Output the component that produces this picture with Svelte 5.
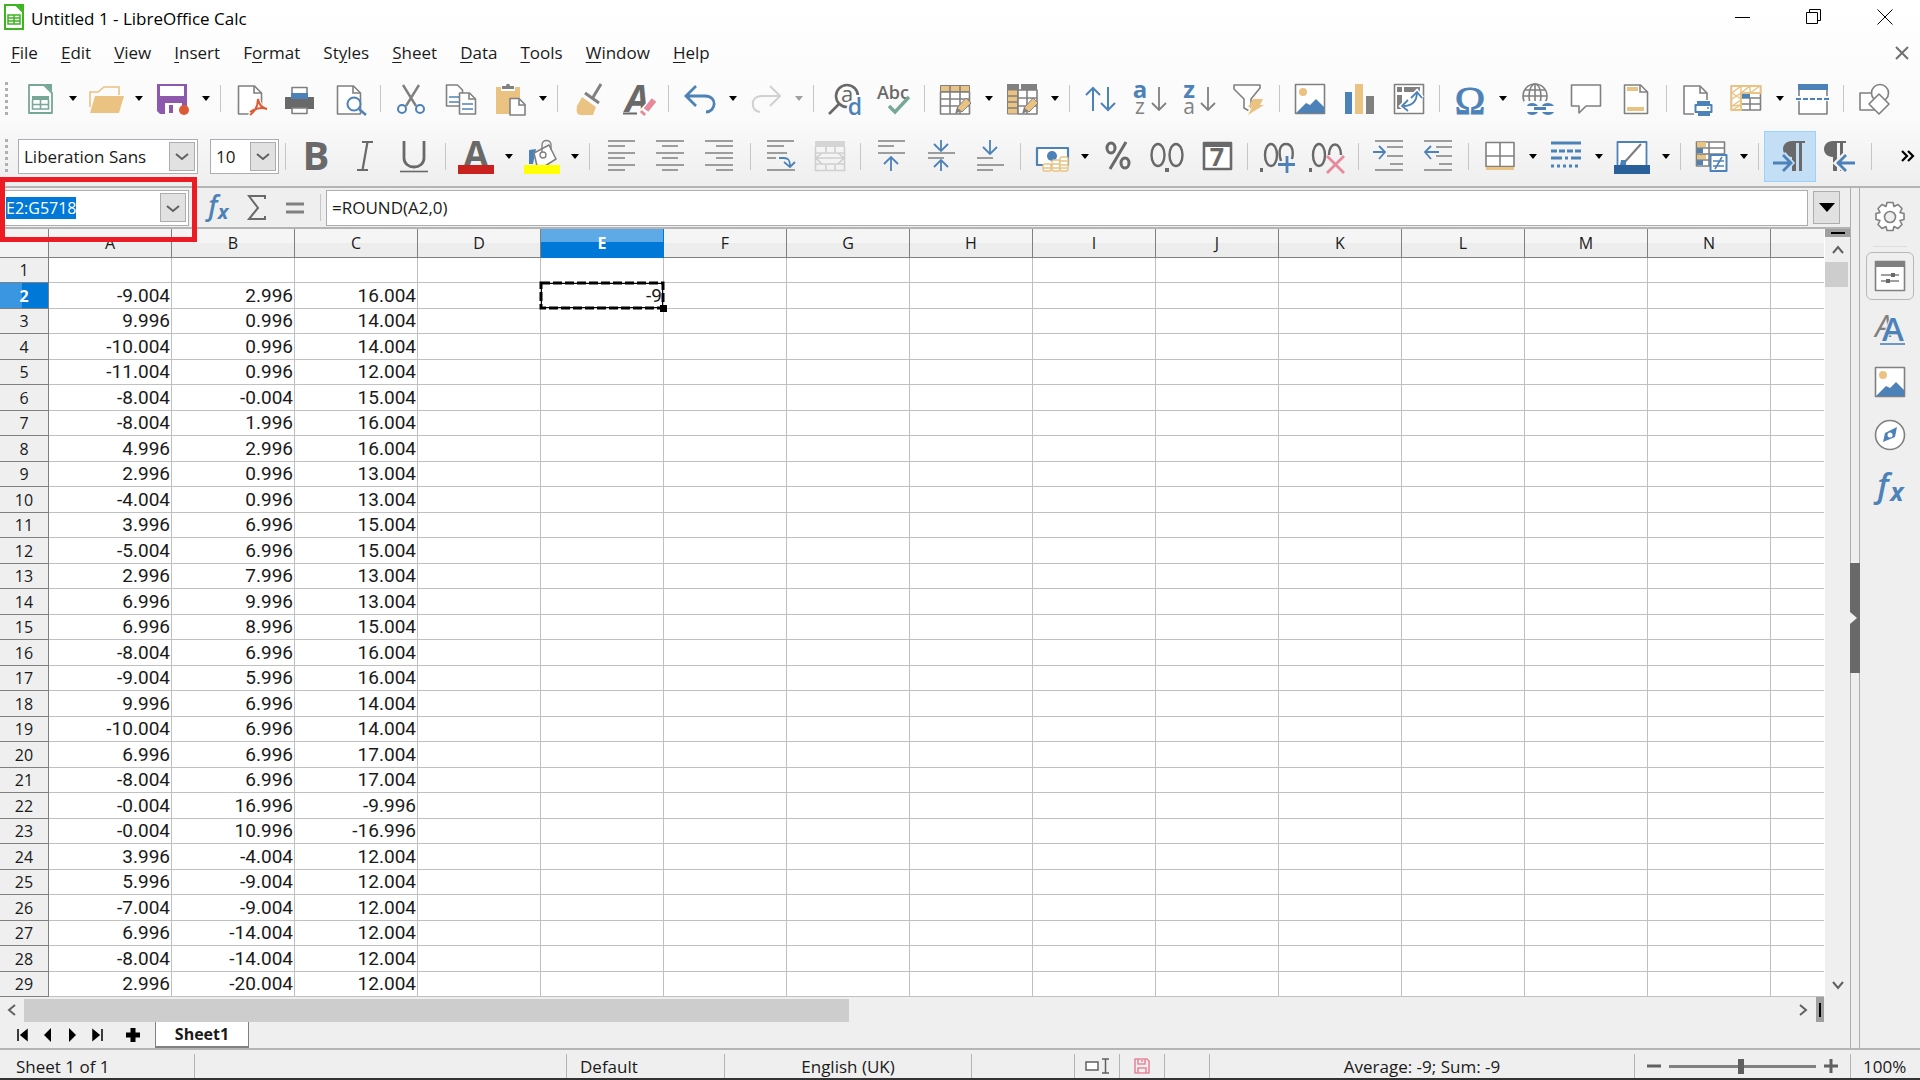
<script lang="ts">
  import { onMount } from 'svelte';

  interface Tool { icon: string; label: string; menu?: boolean; active?: boolean; disabled?: boolean; }

  const t = (icon: string, label: string, menu = false): Tool => ({ icon, label, menu });

  const menus = [
    ['', 'F', 'ile'], ['', 'E', 'dit'], ['', 'V', 'iew'], ['', 'I', 'nsert'], ['F', 'o', 'rmat'],
    ['St', 'y', 'les'], ['', 'S', 'heet'], ['', 'D', 'ata'], ['', 'T', 'ools'], ['', 'W', 'indow'], ['', 'H', 'elp'],
  ];

  const standardBar: Tool[][] = [
    [t('new', 'New', true), t('open', 'Open', true), t('save', 'Save', true)],
    [t('pdf', 'Export as PDF'), t('print', 'Print'), t('preview', 'Print Preview')],
    [t('cut', 'Cut'), t('copy', 'Copy'), t('paste', 'Paste', true)],
    [t('brush', 'Clone Formatting'), t('clear', 'Clear Direct Formatting')],
    [t('undo', 'Undo', true), { icon: 'redo', label: 'Redo', menu: true, disabled: true }],
    [t('find', 'Find & Replace'), t('spell', 'Spelling')],
    [t('row', 'Row', true), t('column', 'Column', true)],
    [t('sort', 'Sort'), t('az', 'Sort Ascending'), t('za', 'Sort Descending'), t('filter', 'AutoFilter')],
    [t('image', 'Insert Image'), t('chart', 'Insert Chart'), t('pivot', 'Pivot Table')],
    [t('omega', 'Special Character', true), t('link', 'Hyperlink'), t('comment', 'Comment'), t('header', 'Headers and Footers')],
    [t('area', 'Define Print Area'), t('freeze', 'Freeze Rows and Columns', true), t('split', 'Split Window')],
    [t('shapes', 'Show Draw Functions')],
  ];

  const formatBar: Tool[][] = [
    [t('bold', 'Bold'), t('italic', 'Italic'), t('underline', 'Underline')],
    [t('fontColor', 'Font Color', true), t('fill', 'Background Color', true)],
    [t('left', 'Align Left'), t('center', 'Center Horizontally'), t('right', 'Align Right')],
    [t('wrap', 'Wrap Text'), { icon: 'merge', label: 'Merge Cells', disabled: true }],
    [t('top', 'Align Top'), t('middle', 'Center Vertically'), t('bottom', 'Align Bottom')],
    [t('currency', 'Currency', true), t('percent', 'Percent'), t('number', 'Number'), t('date', 'Date')],
    [t('addDec', 'Add Decimal Place'), t('delDec', 'Delete Decimal Place')],
    [t('indent', 'Increase Indent'), t('outdent', 'Decrease Indent')],
    [t('borders', 'Borders', true), t('style', 'Border Style', true), t('lineColor', 'Border Color', true)],
    [t('cond', 'Conditional Formatting', true)],
    [{ icon: 'ltr', label: 'Left-To-Right', active: true }, t('rtl', 'Right-To-Left')],
  ];

  const G = '#808080', D = '#696969', B = '#4d82b8', O = '#eac282', P = '#e8899b';
  const ln = (d: string, c = G, w = 1.6, x = '') => `<path d="${d}" fill="none" stroke="${c}" stroke-width="${w}" ${x}/>`;
  const bx = (d: string, c = G, w = 1.6) => `<path d="${d}" fill="#fff" stroke="${c}" stroke-width="${w}" stroke-linejoin="round"/>`;
  const fl = (d: string, c = G) => `<path d="${d}" fill="${c}"/>`;
  const tx = (x: number, y: number, s: number, c: string, v: string, x2 = '') =>
    `<text x="${x}" y="${y}" font-size="${s}" fill="${c}" text-anchor="middle" font-family="Open Sans, sans-serif" ${x2}>${v}</text>`;
  const picture = bx('M3.5 3.5h29v29h-29z') + `<circle cx="11" cy="11" r="4" fill="${O}"/>` + fl('M4 32L14 22l4 2 6-6 8 8v6z', B);
  const pencil = fl('M18 33l2-7 4 4z', G) + `<path d="M20 27L29 17l5 5-9 9z" fill="${O}" stroke="${G}"/>`;
  const pilcrow = (x: number) => fl(`M${x} 3h13v2h-3v28h-3V5h-3v28h-4V19c-6 0-9-4-9-8s3-8 9-8z`, D);

  const icons: Record<string, string> = {
    new: bx('M7 4h15l8 8v20H7z', '#76a797', 1.8) + fl('M22 3h8v8z', '#76a797') + fl('M10 15h17v4H10z', '#76a797') +
      ln('M10.5 19v9h16v-9M18.5 15v13M10 23.500h17', '#76a797', 1.6),
    open: ln('M2 26V11h8l6-5h15v8', O, 1.6) + fl('M7 15h29l-5 17H2z', O),
    save: fl('M2 3h30v30H5l-3-3z', '#8e59ad') + fl('M5 5h24v10H5zM10 22h17v11H10z', '#fff') + fl('M14 24h4v8h-4z', '#8e59ad') +
      '<circle cx="29" cy="29" r="5" fill="#dc5a35"/>',
    pdf: bx('M5.500 5h16l7 7v21h-23z') + ln('M21 5v7h7') + fl('M14 36l20-2-8-18-6 8z', '#fbfbfb') +
      ln('M17 34c4-3 8-9 8-16 1 6 4 9 9 10-6-2-11-1-17 3', '#dc5a35', 2),
    print: fl('M3 16h29v12H3z', D) + bx('M10 17V6.500h15V17z', G) + fl('M9 12h17v6H9z', B) + bx('M10 27h15v5.500H10z'),
    preview: bx('M5.500 5h16l7 7v21h-23z') + ln('M21 5v7h7') + `<circle cx="22" cy="23" r="6.500" fill="#fff" stroke="${B}" stroke-width="2"/>` + ln('M27 28l7 6', B, 2.4),
    cut: ln('M10 4l13 21M26 4L13 25', G, 2.4) + `<g fill="none" stroke="${B}" stroke-width="2"><circle cx="9" cy="28" r="4"/><circle cx="27" cy="28" r="4"/></g>`,
    copy: bx('M3.500 4h11l5 5v16h-16z') + ln('M6 16h10M6 21h10', B) + bx('M16.500 12h10l6 6v15h-16z') + ln('M26 12v6h6') + ln('M19 23h11M19 28h11', B),
    paste: fl('M4 6h24v27H4z', O) + fl('M9 5h14v5H9z', '#fff') + fl('M10 5h4c0-3 4-3 4 0h4v3H10z') + bx('M18 17.500h9l6 6v10.500H18z') + ln('M27 18v6h6'),
    brush: ln('M30 3l-9 15', G, 3) + ln('M14 12l14 10', G, 3) + fl('M11 16l14 10-3 8H10c-4 0-5-3-4-9z', O),
    clear: tx(17, 31, 37, D, 'A', 'font-weight="700" font-style="italic"') + ln('M3 32.500h14', D, 2) + ln('M23 32L35 19', '#fff', 9) + ln('M26 29l8-10', P, 6) + ln('M22 33l2-2', P, 6),
    undo: ln('M14 5L4 15l10 10M5 15h18c13 0 11 16 1 16', B, 2.8),
    redo: ln('M22 5l10 10-10 10M31 15H14C1 15 3 31 12 31', '#d0d0d0', 2),
    find: `<circle cx="21" cy="15" r="11" fill="none" stroke="${D}" stroke-width="2.600"/>` + ln('M3 33l10-10', D, 2.6) + tx(21, 21, 22, D, 'a') +
      tx(29, 34, 23, B, 'd', 'stroke="#fff" stroke-width="4" paint-order="stroke" font-weight="600"'),
    spell: tx(17, 18, 18, D, 'Abc', 'font-weight="600"') + ln('M13 25l6 6 14-15', '#76a797', 3.4),
    row: bx('M3.500 11h29v22h-29z') + ln('M3 18h30M3 25h30M13 11v22M23 11v22') + `<path d="M3.500 4.500h29v6h-29z" fill="${O}" stroke="${G}"/>` + ln('M13 4v7M23 4v7') + pencil,
    column: bx('M14 9h19v24H14z') + ln('M14 17h19M14 25h19M23 9v24') + fl('M3 3h12v6H3zM17 3h16v6H17z') + `<path d="M3.500 9h10v24h-10z" fill="${O}" stroke="${G}"/>` + ln('M3 15h11M3 21h11M3 27h11') + pencil,
    sort: ln('M11 30V7M4 14l7-7 7 7M26 6v23M19 22l7 7 7-7', B, 2),
    az: tx(8, 17, 24, B, 'a', 'font-weight="700"') + tx(8, 33, 21, G, 'z') + ln('M27 6v23M20 22l7 7 7-7', G, 1.8),
    za: tx(8, 17, 24, B, 'z', 'font-weight="700"') + tx(8, 33, 21, G, 'a') + ln('M27 6v23M20 22l7 7 7-7', G, 1.8),
    filter: bx('M4 4h26v3l-9 11v13l-7-4V18L4 8z') + ln('M34 17L19 34', '#fbfbfb', 7) + fl('M23 18h10l-3 6h4L18 34l4-8h-4z', O),
    image: picture,
    chart: fl('M4 11h7v22H4z', B) + fl('M14 3h8v30h-8z', O) + fl('M25 15h8v18h-8z'),
    pivot: bx('M3.500 3.500h29v29h-29z') + fl('M6 6h5v5H6zM13 6h16v5H13zM6 14h5v14H6z') + ln('M12 25c10 0 14-6 14-14M17 19l-6 6 6 5M20 17l6-6 5 6', '#fff', 5) + ln('M12 25c10 0 14-6 14-14M17 19l-6 6 6 5M20 17l6-6 5 6', B, 1.8),
    omega: `<text x="18" y="33" font-size="41" fill="${B}" stroke="${B}" text-anchor="middle" font-family="Liberation Serif, serif">Ω</text>`,
    link: `<g fill="none" stroke="${G}" stroke-width="1.600"><circle cx="16" cy="15" r="12"/><ellipse cx="16" cy="15" rx="6" ry="12"/><path d="M4 15h24M16 3v24M6 9h20"/></g>` +
      fl('M5 20h31v15H5z', '#fbfbfb') + fl('M8 25c1-4 9-4 11 0zM23 25c1-4 10-4 12 0zM15 26h12v3H15zM8 31h11c-2 4-10 4-11 0zM23 31h12c-2 4-10 4-12 0z', B),
    comment: bx('M3.500 4h29v21H18l-7 7v-7H3.500z'),
    header: bx('M6.500 4h16l7 7v21.500h-23z') + ln('M22 4v7h7') + fl('M9 6h11v4H9zM9 26h17v4H9z', O),
    area: bx('M5 5h16l7 7v21H5z') + ln('M21 5v7h7') + fl('M15 19h20v16H15z', '#fbfbfb') + fl('M18 20h13v4H18zM19 30h12v5H19z', B) + bx('M16.500 24h16v7h-16z', B, 2) + ln('M28 27h2', B),
    freeze: bx('M3.500 5h29v24h-29z') + ln('M13 17h19M13 23h19M22 17v12') + `<path d="M13 29H3.500V5h29v7H13z" fill="#fff" stroke="${O}" stroke-width="1.800"/>` +
      ln('M4 12l9-7v7l9-7v7l10-7M4 18l9-6v7l-9 6 9-1-9 5M4 12l9 6M13 5v24', O, 1.4) + fl('M14 13h8v4h-8z', B),
    split: bx('M4 4h28v29H4z') + fl('M3 3h30v6H3z', B) + fl('M1 15h34v5H1z', '#fbfbfb') + ln('M1 18h34', B, 1.8, 'stroke-dasharray="5 2"'),
    shapes: bx('M4 12h17v17H4z') + '<circle cx="24" cy="12" r="8.500" fill="#fff" stroke="#808080" stroke-width="1.600"/>' + bx('M23 13l10 10-10 10-10-10z'),
    bold: tx(18, 32, 40, D, 'B', 'font-weight="700"'),
    italic: ln('M15 4h11M10 32h11M20.500 4l-5 28', D, 2.2),
    underline: ln('M8 3v17c0 12 20 12 20 0V3', D, 2.8) + ln('M4 33.500h28', D, 1.6),
    fontColor: tx(18, 29, 36, D, 'A', 'font-weight="700"') + fl('M0 27h36v9H0z', '#c9211e'),
    fill: fl('M5 26V12l7-1-3 15z', B) + bx('M10 15l15-8 7 14-11 7H13z') + ln('M18 17V7c0-6 9-6 9 0v5', G, 1.4) + '<circle cx="19" cy="17" r="3" fill="#fff" stroke="#808080" stroke-width="1.400"/>' + fl('M0 27h36v9H0z', '#ffff00'),
    left: ln('M5 3h27M5 8h17M5 15h27M5 20h17M5 27h27M5 32h17'),
    center: ln('M4 3h28M10 8h16M4 15h28M10 20h16M4 27h28M10 32h16'),
    right: ln('M4 3h28M15 8h17M4 15h28M15 20h17M4 27h28M15 32h17'),
    wrap: ln('M4 3h27M4 8h17M4 15h20M4 20h9M4 32h28') + ln('M16 20h5c5 0 6 3 6 8M21 24l6 5 5-5', B, 1.8),
    merge: fl('M3 3h30v6H3z', '#d5d5d5') + ln('M3.500 9v23.500h29V9M14 9v6M23 9v6M14 27v6M23 27v6M3 15h8M25 15h8M3 26h8M25 26h8M5 20h26M10 15l-6 5 6 6M26 15l6 5-6 6M11 15h14M11 26h14', '#cfcfcf', 1.6),
    top: ln('M5 3h27M5 8h16M5 15h27') + ln('M18 33V20M11 26l7-7 7 7', B, 1.8),
    middle: ln('M5 15h27M5 20h16') + ln('M18 2v10M11 6l7 7 7-7M18 33V23M11 29l7-7 7 7', B, 1.8),
    bottom: ln('M5 20h16M5 27h27M5 32h16') + ln('M18 2v13M11 9l7 7 7-7', B, 1.8),
    currency: bx('M3 10h31v17H3z', B, 2.2) + `<circle cx="18" cy="18" r="5" fill="${B}"/>` + `<g fill="#fff" stroke="${O}" stroke-width="1.400"><rect x="9" y="26" width="8" height="7" rx="2"/><rect x="18" y="22" width="8" height="11" rx="2"/><rect x="26" y="19" width="8" height="14" rx="2"/><path d="M9 30h8M18 26h8M18 30h8M26 23h8M26 27h8M26 30h8"/></g>`,
    percent: `<g fill="none" stroke="${D}" stroke-width="3"><ellipse cx="11" cy="10" rx="4" ry="5"/><ellipse cx="25" cy="25" rx="4" ry="5"/><path d="M26 4L10 31"/></g>`,
    number: `<g fill="none" stroke="${D}" stroke-width="2.400"><ellipse cx="9" cy="17" rx="6.500" ry="11"/><ellipse cx="27" cy="17" rx="6.500" ry="11"/></g>` + fl('M16 30h4v4h-4z', D),
    date: bx('M5 5h27v26H5z', D, 2.6) + fl('M4 4h29v5H4z', D) + tx(18, 28, 25, D, '7', 'font-weight="700"'),
    addDec: `<g fill="none" stroke="${D}" stroke-width="2.400"><ellipse cx="11" cy="17" rx="6" ry="11"/><path d="M21 23c-3-10-1-17 5-17s8 7 6 15"/></g>` + fl('M0 30h3v4H0z', D) + ln('M18 26.500h17M27 18v17', B, 2.8),
    delDec: `<g fill="none" stroke="${D}" stroke-width="2.400"><ellipse cx="10" cy="17" rx="6" ry="11"/><path d="M20 17c0-14 12-14 12 0"/></g>` + fl('M0 30h3v4H0z', D) + ln('M18 18l17 17M35 18L18 35', P, 2.8),
    indent: ln('M4 3h28M16 9h16M16 18h16M19 26h13M4 32h28') + ln('M2 14h12M8 8l6 6-6 7', B, 1.8),
    outdent: ln('M4 3h28M16 9h16M16 18h16M19 26h13M4 32h28') + ln('M19 14H5M11 8l-6 6 6 7', B, 1.8),
    borders: bx('M4 4.500h28v24H4z') + ln('M18 4v24M4 18h28') + fl('M4 29h28v3H4z', O),
    style: ln('M3 5h30', B, 3) + ln('M3 13h30', B, 3, 'stroke-dasharray="6 2"') + ln('M3 20h30', B, 3, 'stroke-dasharray="11 3 3 3"') + ln('M3 28h27', B, 3, 'stroke-dasharray="3 3"'),
    lineColor: bx('M3.500 4h29v25h-29z', B, 1.8) + ln('M9 26L27 6', G, 2.2) + fl('M6 27l1-5h5v5z', B) + fl('M0 27h36v9H0z', '#2a6099'),
    cond: bx('M3.500 4h28v24h-28z') + fl('M4 4h9v5H4zM4 16h9v5H4z', O) + fl('M4 10h6v5H4zM4 22h6v5H4z', B) + ln('M4 10h28M4 16h28M4 22h28M16 4v24') + bx('M17.500 17h16v16h-16z', B, 2) + ln('M20 23h11M20 28h11M29 19l-7 12', B, 1.6),
    ltr: pilcrow(20) + ln('M2 25h17M11 16l8 9-8 8', '#c4dff5', 6) + ln('M1 25h18M11 17l8 8-8 8', B, 2.8),
    rtl: pilcrow(11) + ln('M33 25H15M24 16l-9 9 9 8', '#f3f3f3', 6) + ln('M33 25H15M24 17l-8 8 8 8', B, 2.8),
    gear: bx('M15 3.500h6l1 4 4-2 4 4-2 4 4 1v6l-4 1 2 4-4 4-4-2-1 4h-6l-1-4-4 2-4-4 2-4-4-1v-6l4-1-2-4 4-4 4 2z') + '<circle cx="18" cy="18" r="5.500" fill="#efefef" stroke="#808080" stroke-width="1.600"/>',
    properties: bx('M3.500 3.500h29v29h-29z') + fl('M3 3h30v6H3z') + ln('M9 17h18M9 23h18') + fl('M19 15h4v4h-4zM14 21h4v4h-4z', D),
    styles: tx(12, 26, 31, G, 'A', 'font-style="italic"') + tx(21, 30, 33, B, 'A', 'font-weight="600" stroke="#efefef" stroke-width="2" paint-order="stroke"') + ln('M8 33h25', B, 1.6),
    gallery: picture,
    navigator: '<circle cx="18" cy="18" r="14.500" fill="#fff" stroke="#808080" stroke-width="1.600"/>' + fl('M11 25l2-9 12-6-2 10z', B) + '<circle cx="18" cy="18" r="2.500" fill="#fff"/>',
    fx: tx(11, 27, 33, B, 'f', 'font-weight="600" font-style="italic"') + tx(25, 31, 25, B, 'x', 'font-weight="700" font-style="italic"'),
    wizard: tx(12, 25, 27, B, 'f', 'font-weight="600" font-style="italic"') + tx(22, 29, 20, B, 'x', 'font-weight="700" font-style="italic"'),
    sum: ln('M26 9V6H10l9 12-9 11h16v-3', D, 2),
    equals: ln('M9 14h18M9 22h18', G, 3),
  };

  const columns = 'ABCDEFGHIJKLMN'.split('');
  const data = [
    [], ['-9.004', '2.996', '16.004', '', '-9'], ['9.996', '0.996', '14.004'], ['-10.004', '0.996', '14.004'],
    ['-11.004', '0.996', '12.004'], ['-8.004', '-0.004', '15.004'], ['-8.004', '1.996', '16.004'],
    ['4.996', '2.996', '16.004'], ['2.996', '0.996', '13.004'], ['-4.004', '0.996', '13.004'],
    ['3.996', '6.996', '15.004'], ['-5.004', '6.996', '15.004'], ['2.996', '7.996', '13.004'],
    ['6.996', '9.996', '13.004'], ['6.996', '8.996', '15.004'], ['-8.004', '6.996', '16.004'],
    ['-9.004', '5.996', '16.004'], ['9.996', '6.996', '14.004'], ['-10.004', '6.996', '14.004'],
    ['6.996', '6.996', '17.004'], ['-8.004', '6.996', '17.004'], ['-0.004', '16.996', '-9.996'],
    ['-0.004', '10.996', '-16.996'], ['3.996', '-4.004', '12.004'], ['5.996', '-9.004', '12.004'],
    ['-7.004', '-9.004', '12.004'], ['6.996', '-14.004', '12.004'], ['-8.004', '-14.004', '12.004'],
    ['2.996', '-20.004', '12.004'],
  ];

  const decks = [
    { icon: 'properties', label: 'Properties' }, { icon: 'styles', label: 'Styles' }, { icon: 'gallery', label: 'Gallery' },
    { icon: 'navigator', label: 'Navigator' }, { icon: 'fx', label: 'Functions' },
  ];

  let deck = $state('properties');
  let reference = $state('E2:G5718');
  let formula = $state('=ROUND(A2,0)');
  let zoom = $state(100);
  let nameBox: HTMLInputElement;

  onMount(() => {
    nameBox.focus();
    nameBox.select();
  });
</script>

{#snippet glyph(name: string)}
  <svg class="icon" width="36" height="36" viewBox="0 0 36 36" aria-hidden="true">{@html icons[name]}</svg>
{/snippet}

{#snippet chevron(d: string)}
  <svg width="14" height="14" viewBox="0 0 14 14" aria-hidden="true"><path {d} fill="none" stroke="#606060" stroke-width="2" /></svg>
{/snippet}

{#snippet tools(groups: Tool[][])}
  {#each groups as group, g}
    {#if g > 0}<span class="sep"></span>{/if}
    {#each group as tool}
      <button class="tool" class:active={tool.active} disabled={tool.disabled} aria-label={tool.label}>{@render glyph(tool.icon)}</button>
      {#if tool.menu}
        <button class="drop" disabled={tool.disabled} aria-label="{tool.label} options"></button>
      {/if}
    {/each}
  {/each}
{/snippet}

<div class="app">
  <div class="top">
    <header class="titlebar">
      <svg width="20" height="26" viewBox="0 0 20 26" aria-hidden="true">
        <path d="M1 1h11l7 7v17H1z" fill="#fff" stroke="#3cb521" stroke-width="2" />
        <path d="M12 0h8v8z" fill="#3cb521" />
        <path d="M4 11h12v9H4zM4 14h12M4 17h12M10 11v9" fill="none" stroke="#3cb521" stroke-width="1.500" />
      </svg>
      <span class="title">Untitled 1 - LibreOffice Calc</span>
      <button class="win" aria-label="Minimize"><svg width="16" height="16"><path d="M0 8.500h15" stroke="#000" /></svg></button>
      <button class="win" aria-label="Restore"><svg width="16" height="16"><path d="M.5 3.500h11v11H.5zM3.500 3V.5h11v11H12" fill="none" stroke="#000" /></svg></button>
      <button class="win" aria-label="Close"><svg width="16" height="16"><path d="M.5.5l15 15M15.500.5l-15 15" stroke="#000" /></svg></button>
    </header>
    <nav class="menubar">
      {#each menus as [before, key, after]}
        <button>{before}<u>{key}</u>{after}</button>
      {/each}
      <button class="close-doc" aria-label="Close Document"><svg width="14" height="14"><path d="M1 1l12 12M13 1L1 13" stroke="#707070" stroke-width="2" /></svg></button>
    </nav>
    <div class="toolbar standard">
      <span class="grip"></span>
      {@render tools(standardBar)}
    </div>
    <div class="toolbar formatting">
      <span class="grip"></span>
      <div class="combo font-name">
        <select aria-label="Font Name"><option>Liberation Sans</option></select>
        <span class="combo-btn">{@render chevron('M1 5l6 5 6-5')}</span>
      </div>
      <div class="combo font-size">
        <select aria-label="Font Size"><option>10</option></select>
        <span class="combo-btn">{@render chevron('M1 5l6 5 6-5')}</span>
      </div>
      <span class="sep"></span>
      {@render tools(formatBar)}
      <span class="sep"></span>
      <button class="more" aria-label="More controls"><svg width="14" height="12"><path d="M1 1l5 5-5 5M7 1l5 5-5 5" fill="none" stroke="#000" stroke-width="2.200" /></svg></button>
    </div>
  </div>

  <div class="main">
    <div class="work">
      <div class="formula-bar">
        <div class="name-box">
          <input aria-label="Name Box" bind:this={nameBox} bind:value={reference} />
          <button class="combo-btn" aria-label="Named ranges">{@render chevron('M1 5l6 5 6-5')}</button>
          <span class="marker"></span>
        </div>
        <button aria-label="Function Wizard">{@render glyph('wizard')}</button>
        <button aria-label="Select Function">{@render glyph('sum')}</button>
        <button aria-label="Formula">{@render glyph('equals')}</button>
        <span class="sep"></span>
        <input class="formula" aria-label="Input line" bind:value={formula} />
        <button class="expand" aria-label="Expand Formula Bar"></button>
      </div>

      <div class="sheet">
        <table>
          <colgroup>
            <col class="col-head" />
            {#each columns as c}<col class="col-cell" />{/each}
            <col />
          </colgroup>
          <thead>
            <tr>
              <th class="corner"></th>
              {#each columns as c}<th class:current={c === 'E'}>{c}</th>{/each}
              <th class="rest"></th>
            </tr>
          </thead>
          <tbody>
            {#each data as row, r}
              <tr>
                <th class:current={r === 1}>{r + 1}</th>
                {#each columns as c, i}
                  {#if r === 1 && c === 'E'}
                    <td class="cursor">{row[i]}<svg class="ants" aria-hidden="true"><rect width="100%" height="100%" /></svg></td>
                  {:else}
                    <td>{row[i] ?? ''}</td>
                  {/if}
                {/each}
                <td class="rest"></td>
              </tr>
            {/each}
          </tbody>
        </table>
        <div class="vscroll">
          <span class="split-h"></span>
          <button aria-label="Scroll up">{@render chevron('M2 10l5-6 5 6')}</button>
          <span class="thumb"></span>
          <button class="last" aria-label="Scroll down">{@render chevron('M2 4l5 6 5-6')}</button>
        </div>
      </div>

      <div class="hscroll">
        <button aria-label="Scroll left">{@render chevron('M10 2L4 7l6 5')}</button>
        <div class="track"><span class="thumb"></span></div>
        <button aria-label="Scroll right">{@render chevron('M4 2l6 5-6 5')}</button>
        <span class="split-v"></span>
      </div>

      <div class="tabs">
        <button aria-label="First sheet"><svg width="12" height="14"><path d="M1 1v12M10 2v10L4 7z" stroke="#000" stroke-width="1.500" /></svg></button>
        <button aria-label="Previous sheet"><svg width="12" height="14"><path d="M9 0v14L2 7z" /></svg></button>
        <button aria-label="Next sheet"><svg width="12" height="14"><path d="M2 0v14l7-7z" /></svg></button>
        <button aria-label="Last sheet"><svg width="12" height="14"><path d="M10 1v12M1 2v10l6-5z" stroke="#000" stroke-width="1.500" /></svg></button>
        <button class="add" aria-label="Add sheet"><svg width="14" height="14"><path d="M7 0v14M0 7h14" stroke="#000" stroke-width="5" /></svg></button>
        <button class="tab">Sheet1</button>
      </div>
    </div>

    <button class="splitter" aria-label="Hide sidebar"><span></span></button>

    <aside class="sidebar">
      <button aria-label="Sidebar Settings">{@render glyph('gear')}</button>
      <hr />
      {#each decks as d}
        <button class:selected={deck === d.icon} aria-label={d.label} onclick={() => (deck = d.icon)}>{@render glyph(d.icon)}</button>
      {/each}
    </aside>
  </div>

  <footer class="statusbar">
    <span class="field sheets">Sheet 1 of 1</span>
    <span class="field found"></span>
    <span class="field page-style">Default</span>
    <span class="field language">English (UK)</span>
    <span class="field blank"></span>
    <span class="field flag">
      <svg width="24" height="16"><path d="M1 4h12v8H1z" fill="#fff" stroke="#606060" stroke-width="1.500" /><path d="M17 1h7M17 15h7M20.500 1v14" stroke="#606060" stroke-width="1.500" /></svg>
    </span>
    <span class="field flag">
      <svg width="16" height="16"><path d="M1 1h12l2 2v12H1zM4 1v5h7V1M4 15v-5h8v5M8 2v2" fill="none" stroke="#e8899b" stroke-width="1.600" /></svg>
    </span>
    <span class="field flag"></span>
    <span class="field sums">Average: -9; Sum: -9</span>
    <span class="field zoom">
      <button aria-label="Zoom out"><svg width="14" height="14"><path d="M0 7h14" stroke="#606060" stroke-width="3" /></svg></button>
      <input type="range" aria-label="Zoom" min="0" max="204" bind:value={zoom} />
      <button aria-label="Zoom in"><svg width="14" height="14"><path d="M0 7h14M7 0v14" stroke="#606060" stroke-width="3" /></svg></button>
    </span>
    <span class="percent">{zoom}%</span>
  </footer>
</div>

<style>
  :global(body) { overflow: hidden; }

  .app {
    display: flex; flex-direction: column; height: 100vh; box-sizing: border-box;
    border-bottom: 2px solid #333; background: #efefef; color: #1a1a1a;
    font-family: "Open Sans", "Noto Sans", sans-serif; font-size: 17px;
  }
  .app * { box-sizing: border-box; }
  button { padding: 0; border: 0; background: none; font: inherit; color: inherit; display: flex; align-items: center; justify-content: center; }
  input, select { font: inherit; color: inherit; border: 0; outline: 0; min-width: 0; }
  svg { display: block; overflow: visible; flex: none; }

  .top { background: linear-gradient(#fff, #fafafa 65%, #eee); border-bottom: 2px solid #b4b4b4; }

  .titlebar { display: flex; align-items: center; height: 34px; padding-left: 4px; }
  .title { flex: 1; padding: 2px 0 0 7px; color: #000; }
  .win { width: 71px; height: 34px; }

  .menubar { display: flex; align-items: center; gap: 23px; height: 37px; padding: 0 11px; }
  .menubar u { text-underline-offset: 3px; }
  .close-doc { margin-left: auto; }

  .toolbar { display: flex; align-items: center; padding-left: 5px; }
  .standard { height: 55px; padding-right: 21px; }
  .formatting { height: 60px; padding-right: 5px; }
  .grip { width: 3px; height: 34px; margin-right: 7px; background: repeating-linear-gradient(#b0b0b0 0 3px, transparent 3px 6px); }
  .tool { flex: 1 1 0; min-width: 0; height: 51px; }
  .tool.active { background: #c4dff5; border: 1px solid #99d1ff; }
  .drop { width: 17px; height: 51px; }
  .drop::before, .expand::before { content: ""; border: 4px solid transparent; border-top: 5px solid #000; border-bottom: 0; }
  .drop:disabled::before { border-top-color: #a0a0a0; }
  .sep { flex: none; width: 12px; height: 27px; background: linear-gradient(#c6c6c6, #c6c6c6) center / 1px 100% no-repeat; }
  .more { width: 38px; height: 51px; justify-content: flex-end; }

  .combo { position: relative; display: flex; flex: none; height: 35px; background: #fff; border: 1px solid #abadb3; }
  .combo select { appearance: none; width: 100%; padding: 0 5px; background: none; }
  .combo .combo-btn { position: absolute; right: 2px; top: 2px; pointer-events: none; }
  .combo-btn { display: flex; align-items: center; justify-content: center; width: 26px; height: 29px; background: #e1e1e1; border: 1px solid #adadad; }
  .font-name { width: 180px; margin: 0 12px 0 3px; }
  .font-size { width: 69px; }

  .main { display: flex; flex: 1; min-height: 0; border-bottom: 2px solid #b4b4b4; }
  .work { display: flex; flex-direction: column; flex: 1; min-width: 0; }

  .formula-bar { display: flex; align-items: center; height: 41px; padding-right: 10px; border-bottom: 2px solid #b4b4b4; }
  .formula-bar > button:not(.expand) { width: 38px; height: 36px; }
  .formula-bar > .name-box + button { margin-left: 11px; }
  .name-box { position: relative; display: flex; align-items: center; width: 189px; height: 36px; padding: 0 2px 0 5px; background: #fff; border: 1px solid #abadb3; }
  .name-box input { flex: 1; padding: 0; background: none; font-size: 16px; }
  .name-box input::selection { background: #0078d7; color: #fff; }
  .marker { position: absolute; z-index: 3; left: -1px; top: -14px; width: 197px; height: 65px; border: 5px solid #ed1c24; pointer-events: none; }
  .formula { flex: 1; height: 36px; margin-right: 5px; padding: 0 5px; background: #fff; border: 1px solid #abadb3; }
  .expand { width: 27px; height: 33px; background: #e1e1e1; border: 1px solid #adadad; }
  .expand::before { border-width: 9px 8px 0; }

  .sheet { display: flex; background: #fff; }
  table { flex: 1; width: 0; table-layout: fixed; border-spacing: 0; font-size: 16px; }
  .col-head { width: 49px; }
  .col-cell { width: 123px; }
  th, td { height: 25px; padding: 0; line-height: 20px; white-space: nowrap; }
  tbody tr:nth-child(even) > * { height: 26px; }
  thead th { height: 29px; background: linear-gradient(#f5f5f5 50%, #ededed 50%); }
  th { font-weight: 400; background: #efefef; border-right: 1px solid #808080; border-bottom: 1px solid #808080; }
  th.corner { background: #f3f3f3; }
  thead .rest { border-right: 0; }
  thead .current { background: linear-gradient(#5eaae6 45%, #0078d7 45%); border-color: #0078d7; color: #fff; font-weight: 700; }
  tbody .current { background: linear-gradient(90deg, #3a96e0 45%, #0078d7 45%); color: #fff; font-weight: 700; }
  td { padding-right: 1px; border-right: 1px solid #c0c0c0; border-bottom: 1px solid #c0c0c0; text-align: right; font-family: Roboto, sans-serif; font-size: 19px; }
  td.rest { border-right: 0; }
  .cursor { position: relative; }
  .cursor::before { content: ""; position: absolute; inset: 0; border: 1px solid #000; }
  .cursor::after { content: ""; position: absolute; right: -4px; bottom: -4px; width: 7px; height: 7px; background: #000; }
  .ants { position: absolute; left: 0; top: 0; width: 100%; height: 100%; }
  .ants rect { fill: none; stroke: #000; stroke-width: 3; stroke-dasharray: 9 3; }

  .vscroll { display: flex; flex-direction: column; width: 25px; margin-left: 1px; background: #efefef; }
  .vscroll button { height: 25px; }
  .vscroll .thumb { height: 25px; margin-right: 2px; background: #cdcdcd; }
  .vscroll .last { margin-top: auto; }
  .split-h { display: flex; height: 8px; background: linear-gradient(#000, #000) center / 14px 2px no-repeat #a0a0a0; }

  .hscroll { display: flex; height: 25px; padding-right: 26px; }
  .hscroll button { width: 24px; }
  .track { display: flex; flex: 1; padding-top: 2px; }
  .track .thumb { flex: 7; background: #cdcdcd; }
  .track::after { content: ""; flex: 8; }
  .split-v { width: 8px; margin-left: 1px; background: linear-gradient(#000, #000) center / 2px 14px no-repeat #a0a0a0; }

  .tabs { display: flex; align-items: center; height: 26px; padding-left: 10px; }
  .tabs button { width: 25px; height: 26px; }
  .tabs .add { width: 45px; }
  .tabs .tab { width: 94px; background: #fff; border: 1px solid #808080; border-top: 0; border-bottom-width: 2px; font-size: 16px; font-weight: 700; }

  .splitter { width: 10px; border: 1px solid #adadad; border-width: 0 1px; }
  .splitter span { display: flex; align-items: center; width: 10px; height: 110px; margin: 0 -1px; background: #696969; flex: none; }
  .splitter span::before { content: ""; border: 6px solid transparent; border-left: 7px solid #f0f0f0; border-right: 0; }

  .sidebar { display: flex; flex-direction: column; align-items: center; width: 60px; padding-top: 5px; gap: 5px; }
  .sidebar button { width: 48px; height: 48px; border: 1px solid transparent; border-radius: 6px; }
  .sidebar .selected { border-color: #b8b8b8; }
  .sidebar hr { width: 34px; height: 1px; margin: 0; border: 0; background: #dcdcdc; }

  .statusbar { display: flex; align-items: center; height: 28px; padding-top: 4px; }
  .field { display: flex; align-items: center; justify-content: center; height: 24px; border-right: 1px solid #b4b4b4; }
  .sheets { width: 195px; justify-content: flex-start; padding-left: 16px; }
  .found { width: 372px; }
  .page-style { width: 158px; justify-content: flex-start; padding-left: 13px; }
  .language { width: 247px; }
  .blank { width: 103px; }
  .flag { width: 45px; }
  .sums { flex: 1; }
  .zoom { width: 216px; gap: 8px; }
  .zoom button { width: 14px; height: 20px; }
  .zoom input { appearance: none; width: 147px; height: 16px; margin: 0; background: linear-gradient(#808080, #808080) center / 100% 3px no-repeat; }
  .zoom input::-webkit-slider-thumb { appearance: none; width: 6px; height: 15px; background: #606060; }
  .percent { width: 69px; padding-left: 12px; }
</style>
